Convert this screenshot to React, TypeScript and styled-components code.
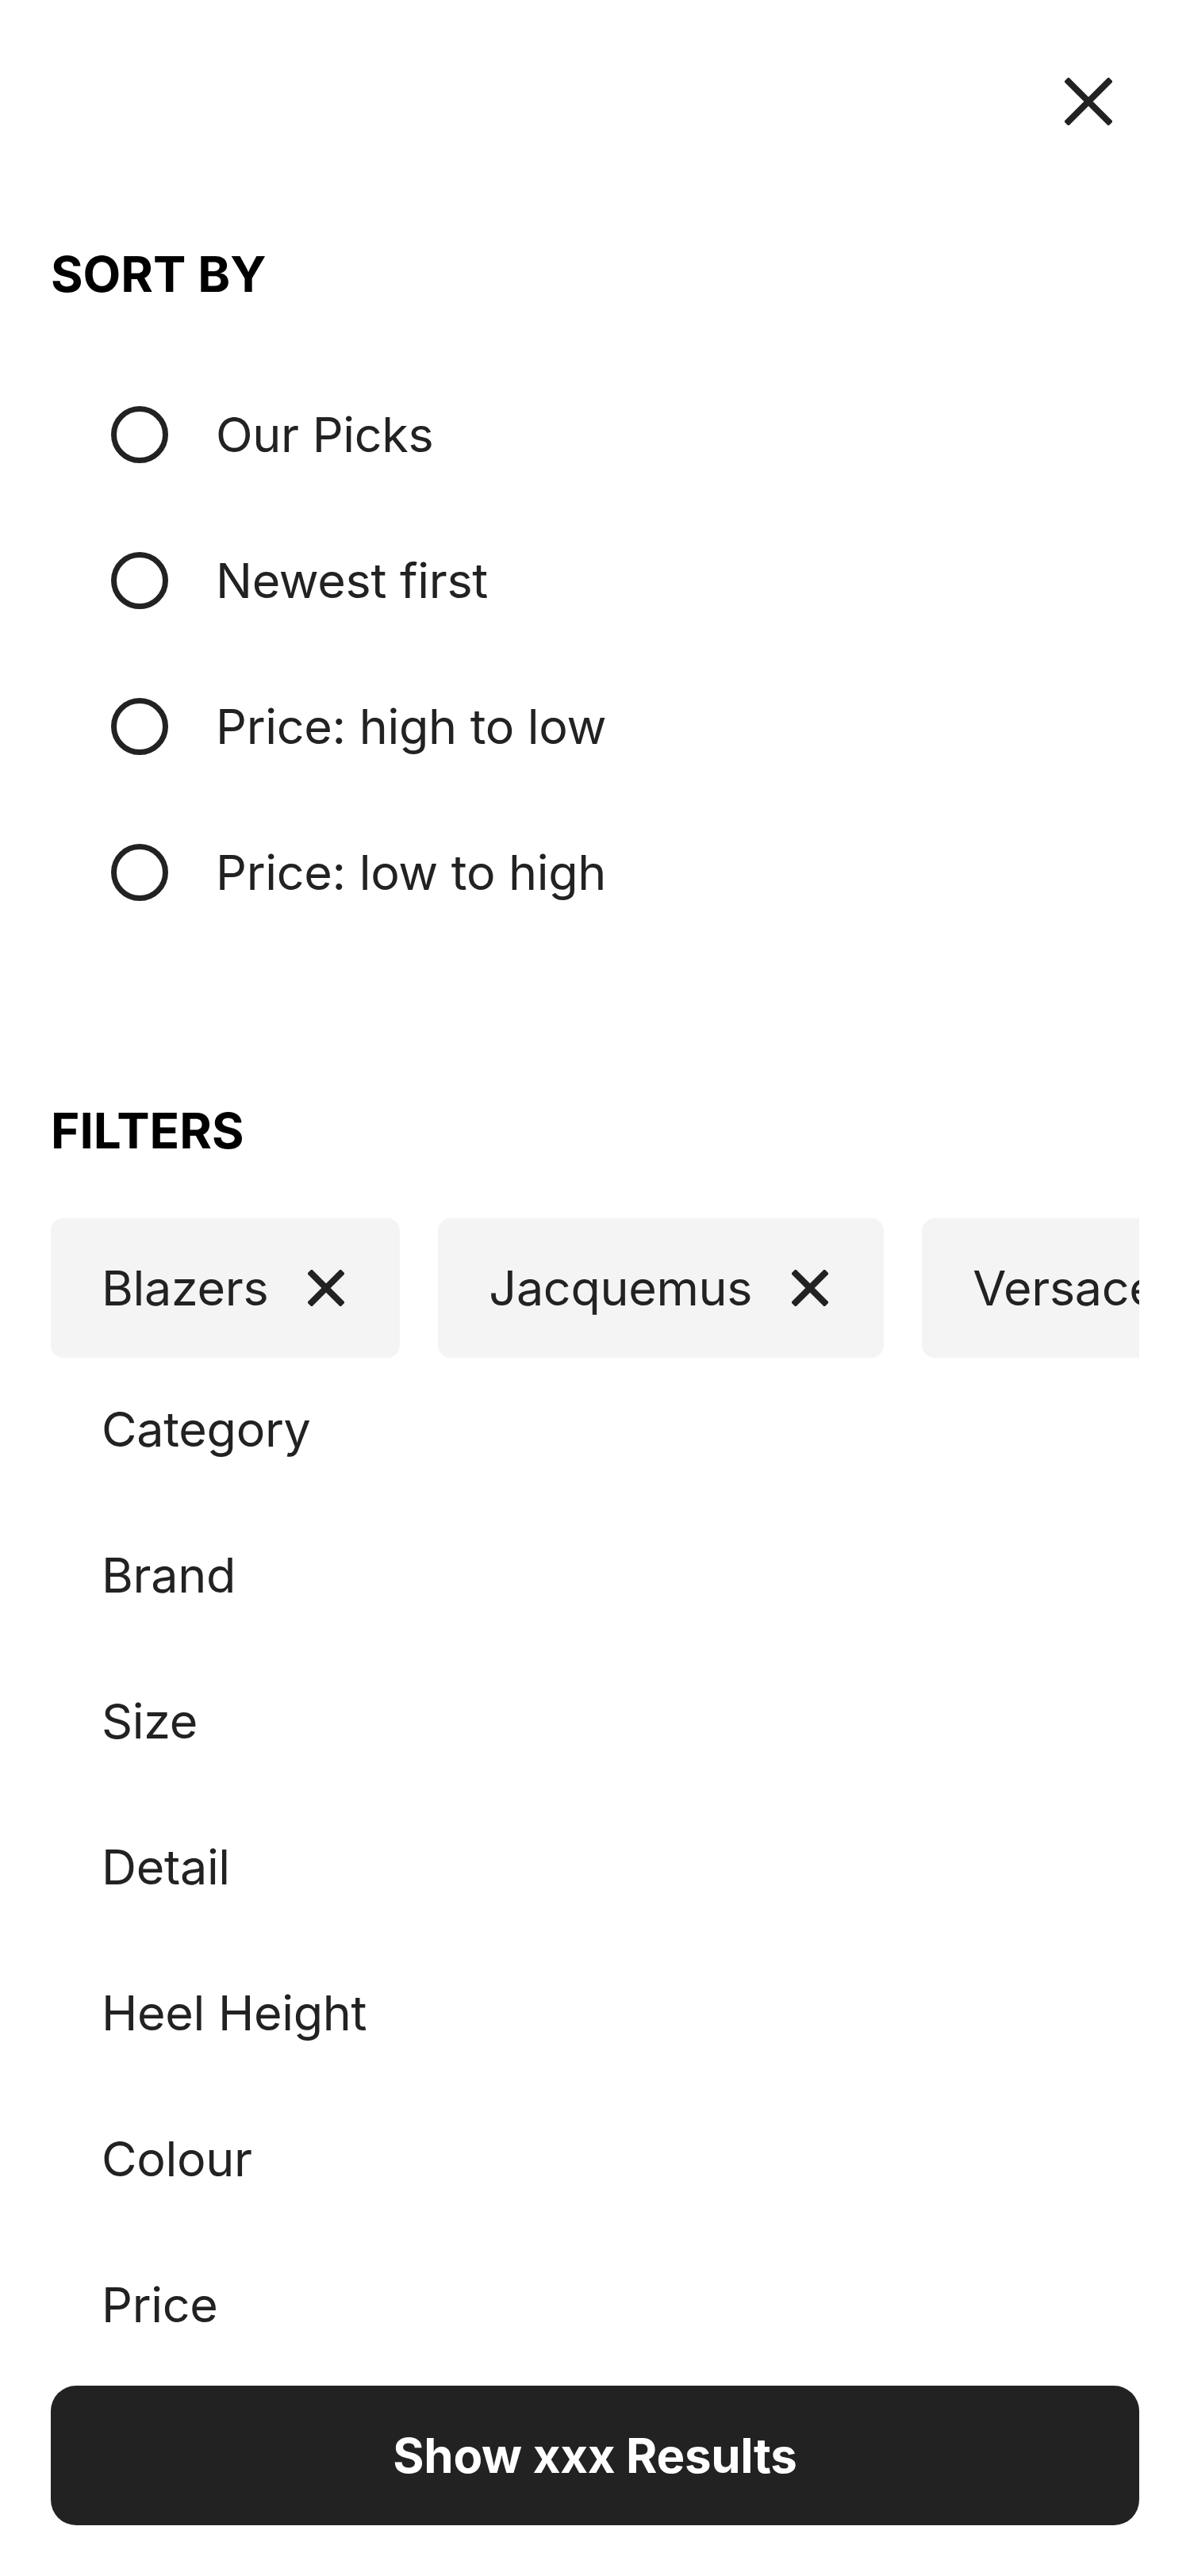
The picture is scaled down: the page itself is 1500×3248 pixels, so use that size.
import React from "react";
import styled, { createGlobalStyle } from "styled-components";

const GlobalStyle = createGlobalStyle`
  html, body {
    margin: 0;
    padding: 0;
    background: #ffffff;
  }
  body {
    font-family: Inter, "Noto Sans", "Liberation Sans", sans-serif;
    color: #222222;
  }
  * { box-sizing: border-box; }
`;

const Sheet = styled.div`
  width: 1500px;
  height: 3248px;
  padding: 0 64px;
  display: flex;
  flex-direction: column;
  background: #ffffff;
  overflow: hidden;
`;

const Header = styled.header`
  display: flex;
  justify-content: flex-end;
  padding-top: 64px;
`;

const CloseButton = styled.button`
  width: 128px;
  height: 128px;
  border: 0;
  padding: 0;
  background: transparent;
  display: flex;
  align-items: center;
  justify-content: center;
  cursor: pointer;
  color: #222222;
`;

const SectionTitle = styled.h2<{ $gap: number }>`
  margin: ${(p) => p.$gap}px 0 0;
  font-size: 62px;
  line-height: 74px;
  font-weight: 700;
  color: #000000;
  letter-spacing: 0;
`;

const RadioList = styled.div`
  margin-top: 73px;
  display: flex;
  flex-direction: column;
`;

const RadioRow = styled.label`
  height: 184px;
  display: flex;
  align-items: center;
  gap: 48px;
  padding-left: 64px;
  font-size: 61px;
  letter-spacing: -0.3px;
  color: #222222;
  cursor: pointer;
`;

const RadioIcon = styled.svg`
  width: 96px;
  height: 96px;
  flex-shrink: 0;
`;

const ChipScroller = styled.div`
  margin-top: 73px;
  display: flex;
  gap: 48px;
  overflow: hidden;
  flex-shrink: 0;
`;

const Chip = styled.div`
  height: 176px;
  flex-shrink: 0;
  display: flex;
  align-items: center;
  gap: 50px;
  padding: 0 70px 0 64px;
  background: #f4f4f4;
  border-radius: 16px;
  font-size: 61px;
  letter-spacing: -0.3px;
  color: #222222;
  white-space: nowrap;
`;

const ChipClose = styled.svg`
  width: 46px;
  height: 46px;
  flex-shrink: 0;
`;

const FilterList = styled.ul`
  list-style: none;
  margin: -2px 0 0;
  padding: 0;
  display: flex;
  flex-direction: column;
`;

const FilterItem = styled.li`
  height: 184px;
  display: flex;
  align-items: center;
  padding-left: 64px;
  font-size: 61px;
  letter-spacing: -0.3px;
  color: #222222;
`;

const Footer = styled.footer`
  margin-top: auto;
  padding-bottom: 64px;
`;

const ResultsButton = styled.button`
  width: 100%;
  height: 176px;
  border: 0;
  border-radius: 32px;
  background: #222222;
  color: #ffffff;
  font-family: Inter, "Noto Sans", "Liberation Sans", sans-serif;
  font-size: 60px;
  letter-spacing: -0.3px;
  font-weight: 700;
  cursor: pointer;
`;

const sortOptions = ["Our Picks", "Newest first", "Price: high to low", "Price: low to high"];
const activeFilters = ["Blazers", "Jacquemus", "Versace"];
const filterGroups = ["Category", "Brand", "Size", "Detail", "Heel Height", "Colour", "Price"];

const CrossIcon = ({ size }: { size: number }) => (
  <svg width={size} height={size} viewBox="0 0 60 60" fill="none">
    <path d="M2 2 L58 58 M58 2 L2 58" stroke="#222222" strokeWidth={8} strokeLinecap="butt" />
  </svg>
);

export default function App() {
  return (
    <>
      <GlobalStyle />
      <Sheet>
        <Header>
          <CloseButton aria-label="Close">
            <CrossIcon size={60} />
          </CloseButton>
        </Header>

        <SectionTitle $gap={117}>SORT BY</SectionTitle>
        <RadioList>
          {sortOptions.map((o) => (
            <RadioRow key={o}>
              <RadioIcon viewBox="0 0 96 96">
                <circle cx="48" cy="48" r="32.5" fill="none" stroke="#222222" strokeWidth="7" />
              </RadioIcon>
              {o}
            </RadioRow>
          ))}
        </RadioList>

        <SectionTitle $gap={197}>FILTERS</SectionTitle>
        <ChipScroller>
          {activeFilters.map((f) => (
            <Chip key={f}>
              {f}
              <ChipClose viewBox="0 0 46 46">
                <path d="M2 2 L44 44 M44 2 L2 44" stroke="#222222" strokeWidth={8} />
              </ChipClose>
            </Chip>
          ))}
        </ChipScroller>

        <FilterList>
          {filterGroups.map((g) => (
            <FilterItem key={g}>{g}</FilterItem>
          ))}
        </FilterList>

        <Footer>
          <ResultsButton>Show xxx Results</ResultsButton>
        </Footer>
      </Sheet>
    </>
  );
}
